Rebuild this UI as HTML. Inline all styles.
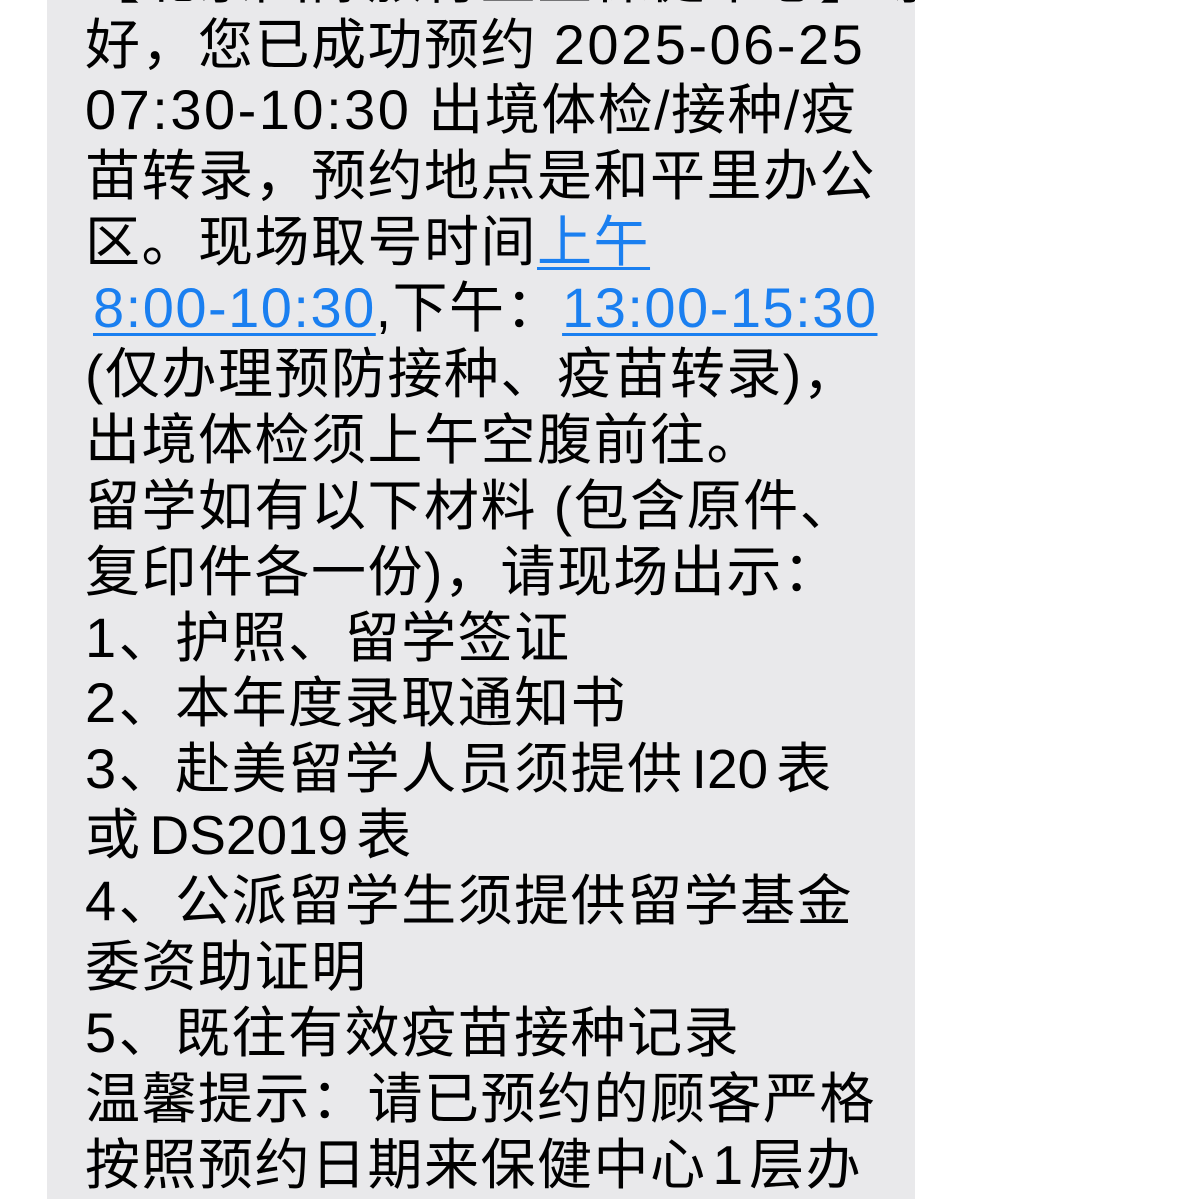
<!DOCTYPE html>
<html><head><meta charset="utf-8"><style>
html,body{margin:0;padding:0;background:#fff;width:1179px;height:1199px;overflow:hidden}
.b{position:absolute;left:47px;top:0;width:868px;height:1199px;background:#e9e9eb}
.l{position:absolute;left:85px;width:830px;overflow:hidden;height:66px;line-height:66px;font-size:55px;white-space:nowrap;color:#000;letter-spacing:1.5px;
font-family:"Liberation Sans","Noto Sans CJK SC",sans-serif}
.d{letter-spacing:2.5px;font-size:56px}
.n{letter-spacing:0;font-size:55px}
a{color:#1a7ff0;text-decoration:underline;text-decoration-thickness:3px;text-underline-offset:6px;letter-spacing:1.5px;font-size:56px}
</style></head><body>
<div class="b"></div>
<div class="l" style="top:-54px">【北京国际旅行卫生保健中心】尊敬的客户</div>
<div class="l" style="top:12px">好，您已成功预约 <span class="d">2025-06-25</span></div>
<div class="l" style="top:77px"><span class="d">07:30-10:30</span> 出境体检/接种/疫</div>
<div class="l" style="top:143px">苗转录，预约地点是和平里办公</div>
<div class="l" style="top:209px">区。现场取号时间<a style="font-size:55px;letter-spacing:1.5px">上午</a></div>
<div class="l" style="top:275px"><a style="padding-left:8px">8:00-10:30</a>,下午：<a>13:00-15:30</a></div>
<div class="l" style="top:341px">(仅办理预防接种、疫苗转录)，</div>
<div class="l" style="top:407px">出境体检须上午空腹前往。</div>
<div class="l" style="top:473px">留学如有以下材料 (包含原件、</div>
<div class="l" style="top:539px">复印件各一份)，请现场出示：</div>
<div class="l" style="top:605px"><span class="d">1</span>、护照、留学签证</div>
<div class="l" style="top:670px"><span class="d">2</span>、本年度录取通知书</div>
<div class="l" style="top:736px"><span class="d">3</span>、赴美留学人员须提供<span style="margin-left:8px" class="n">I20</span><span style="margin-left:8px">表</span></div>
<div class="l" style="top:802px">或<span style="margin-left:8px" class="n">DS2019</span><span style="margin-left:8px">表</span></div>
<div class="l" style="top:868px"><span class="d">4</span>、公派留学生须提供留学基金</div>
<div class="l" style="top:934px">委资助证明</div>
<div class="l" style="top:1000px"><span class="d">5</span>、既往有效疫苗接种记录</div>
<div class="l" style="top:1066px">温馨提示：请已预约的顾客严格</div>
<div class="l" style="top:1132px">按照预约日期来保健中心<span style="margin-left:6px" class="n">1</span><span style="margin-left:6px">层办</span></div>
</body></html>
